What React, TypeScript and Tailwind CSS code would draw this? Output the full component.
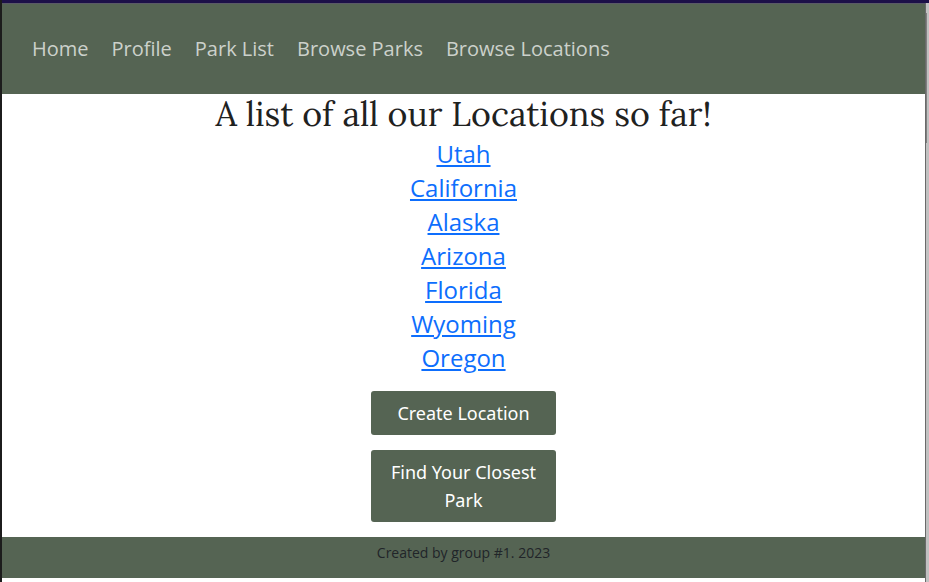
const navItems = ["Home", "Profile", "Park List", "Browse Parks", "Browse Locations"];
const locations = ["Utah", "California", "Alaska", "Arizona", "Florida", "Wyoming", "Oregon"];

export default function App() {
  return (
    <div className="flex min-h-screen flex-col border-l-2 border-[#1c1c1c] bg-white font-['Open_Sans',sans-serif]">
      <div className="h-[3px] bg-[#1c1048]" />
      <div className="flex flex-1">
        <div className="flex min-w-0 flex-1 flex-col">
          <header className="border-t border-[#5a5a66] bg-[#556453] px-[30px] pt-[29px] pb-[30px]">
            <nav className="flex gap-[23px] text-[20px] leading-[31px] text-[#ccd1cb]">
              {navItems.map((item) => (
                <a key={item} href="#">{item}</a>
              ))}
            </nav>
          </header>
          <main className="flex flex-1 flex-col items-center text-center">
            <h1 className="font-['Lora','Liberation_Serif',serif] text-[34px] leading-[39px] text-[#1f221f]">
              A list of all our Locations so far!
            </h1>
            <ul className="pt-1 text-[24px] leading-[34px] text-[#0d6efd]">
              {locations.map((name) => (
                <li key={name}>
                  <a href="#" className="underline">{name}</a>
                </li>
              ))}
            </ul>
            <div className="mt-4 mb-[15px] flex w-[185px] flex-col gap-[15px] font-['Noto_Sans',sans-serif] text-[18px] leading-7 text-white">
              <button className="rounded-[3px] bg-[#556453] px-4 py-2">Create Location</button>
              <button className="rounded-[3px] bg-[#556453] px-4 py-2">Find Your Closest Park</button>
            </div>
          </main>
          <footer className="mb-1 bg-[#556453] pt-1 pb-[13px] text-center text-[14px] leading-6 text-[#212529]">
            Created by group #1. 2023
          </footer>
        </div>
        <div className="w-1 border-l border-[#6a6a6a] bg-[#c1c1c1]">
          <div className="mt-[10px] h-[130px] w-px bg-[#808080]" />
        </div>
      </div>
    </div>
  );
}
